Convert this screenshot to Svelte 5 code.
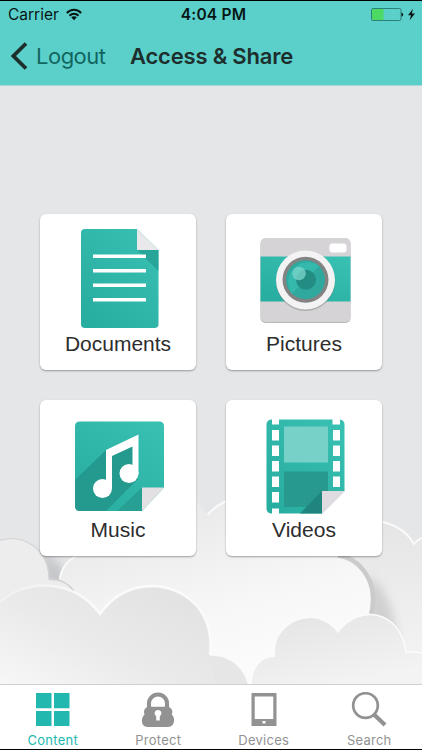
<script lang="ts">
  const title = "Access & Share";

  const cards = [
    { id: "documents", label: "Documents" },
    { id: "pictures", label: "Pictures" },
    { id: "music", label: "Music" },
    { id: "videos", label: "Videos" }
  ];

  const tabs = [
    { id: "content", label: "Content" },
    { id: "protect", label: "Protect" },
    { id: "devices", label: "Devices" },
    { id: "search", label: "Search" }
  ];

  // sprocket holes of the film strip
  const leftHoles = [36, 51.5, 67, 82.5, 98];
  const rightHoles = [36, 51.5, 67, 82.5];

  let active = $state("content");
</script>

<div class="screen">
  <header>
    <div class="status-bar">
      <div class="carrier">
        <span>Carrier</span>
        <svg width="16" height="13" viewBox="0 0 16 13" aria-hidden="true">
          <g fill="none" stroke="#071615" stroke-width="2">
            <path d="M.8 5C4.8 .7 11.2 .7 15.2 5" />
            <path d="M3.5 7.7C6 5.1 10 5.1 12.5 7.7" />
          </g>
          <path d="M5.2 9.3C6.8 7.9 9.2 7.9 10.8 9.3L8 12.2Z" fill="#071615" />
        </svg>
      </div>
      <span class="clock">4:04 PM</span>
      <svg class="battery" width="46" height="14" viewBox="0 0 46 14" aria-hidden="true">
        <rect x="1.5" y=".5" width="29.5" height="12" rx="1.5" fill="none" stroke="#2c8179" />
        <rect x="2" y="1" width="11.5" height="11" fill="#4cd964" />
        <path d="M31.5 4.2Q35 6.5 31.5 8.8Z" fill="#071615" />
        <path d="M43 .8L38 7.2H41L39.6 12.2L45 5.6H41.8Z" fill="#071615" />
      </svg>
    </div>
    <nav>
      <a class="back" href="#logout">
        <svg width="18" height="28" viewBox="0 0 18 28" aria-hidden="true">
          <path d="M16 1.5L3.4 14L16 26.5" fill="none" stroke="#1d2e2d" stroke-width="3.8" />
        </svg>
        <span>Logout</span>
      </a>
      <h1>{title}</h1>
    </nav>
  </header>

  <main>
    <svg class="clouds" width="422" height="284" viewBox="0 400 422 284" aria-hidden="true">
      <defs>
        <linearGradient id="right" x1="0" y1="0" x2="0" y2="1">
          <stop offset="0" stop-color="#e5e5e6" />
          <stop offset="1" stop-color="#f6f6f6" />
        </linearGradient>
        <linearGradient id="mid" x1=".2" y1="0" x2=".7" y2="1">
          <stop offset="0" stop-color="#e5e5e6" />
          <stop offset=".6" stop-color="#f7f7f7" />
          <stop offset="1" stop-color="#fdfdfd" />
        </linearGradient>
        <linearGradient id="front" x1="1" y1="0" x2="0" y2="1">
          <stop offset="0" stop-color="#e0e0e0" />
          <stop offset=".55" stop-color="#eaeaea" />
          <stop offset="1" stop-color="#f8f8f8" />
        </linearGradient>
        <linearGradient id="low" x1="0" y1="0" x2=".5" y2="1">
          <stop offset="0" stop-color="#e3e3e3" />
          <stop offset="1" stop-color="#f3f3f3" />
        </linearGradient>
        <linearGradient id="rim" x1="0" y1="0" x2="1" y2="0">
          <stop offset="0" stop-color="#fbfbfb" stop-opacity=".3" />
          <stop offset=".5" stop-color="#fbfbfb" />
        </linearGradient>
        <filter id="blur" x="-40%" y="-40%" width="180%" height="180%">
          <feGaussianBlur stdDeviation="5" />
        </filter>
      </defs>
      <path d="M340 550C345 522 370 519 384 522C398 525 408 534 414 544Q417 540 424 537V686H330Z" fill="url(#right)" />
      <path d="M382 522C398 525 408 534 414 544Q417 540 424 537" fill="none" stroke="#fafafa" stroke-width="2" />
      <path d="M368 575Q392 590 398 642L385 652H366Z" fill="#c4c4c5" filter="url(#blur)" opacity=".7" />
      <path d="M40 548L62 566L72 588L46 584Z" fill="#b8babd" filter="url(#blur)" opacity=".7" />
      <path d="M-2 541C24 532 49 550 49 579C61 579 70 585 75 594L90 620V684H-2Z" fill="#ededee" stroke="#d2d3d5" stroke-width="1.2" />
      <path d="M59 684V578C62 566 68 561 76 556C92 510 145 478 180 489Q198 500 207.500 515Q214 507 226 501C266 486 292 506 298 524Q310 548 338 556C358 558 372 578 372 600Q372 609 370 615L406 684Z" fill="url(#mid)" />
      <path d="M60 578C62 566 68 561 76 556M207.5 515Q214 507 226 501" fill="none" stroke="#fafafa" stroke-width="2" />
      <!-- lower lobe of the left cloud overlaps the middle one -->
      <path d="M48 579.500C61 579 70 584 74 592L76 610H48Z" fill="#ededee" />
      <path d="M49 579.500C61 579 70 584 74 592" fill="none" stroke="#cfd0d1" stroke-width="1.5" />
      <path d="M338 555.5C360 558 373 579 373 598Q373 608 371 614" fill="none" stroke="#cbcbcb" stroke-width="4.5" />
      <path d="M251 686C251 666 262 656 274.5 656.5C270 622 316 602 338 632C359 603 401 610 406 652.500Q414 650.500 424 654V686Z" fill="url(#low)" stroke="#fbfbfb" stroke-width="1.5" />
      <path d="M209 655C226 654 243 663 249 686H209Z" fill="#e6e6e6" stroke="#fafafa" stroke-width="1.5" />
      <path d="M-2 604C25 578 73 578 100 614C120 585 155 579 182 594C205 607 214 630 210 655L216 690H-2Z" fill="url(#front)" />
      <path d="M-2 604C25 578 73 578 100 614C120 585 155 579 182 594C205 607 213 630 210 655" fill="none" stroke="url(#rim)" stroke-width="2.5" />
    </svg>

    <div class="grid">
      {#each cards as card (card.id)}
        <button class="card">
          <svg width="156" height="116" viewBox="0 0 156 116" aria-hidden="true">
            {#if card.id === "documents"}
              <defs>
                <linearGradient id="teal" x1="1" y1="0" x2=".2" y2="1">
                  <stop offset="0" stop-color="#39c1b4" />
                  <stop offset="1" stop-color="#28aea1" />
                </linearGradient>
              </defs>
              <path d="M45 15H97L118.5 36V110Q118.5 114 114.5 114H45Q41 114 41 110V19Q41 15 45 15Z" fill="url(#teal)" />
              <path d="M97 36H118.5V57Z" fill="#239d91" opacity=".75" />
              <path d="M97 15L118.5 36H97Z" fill="#e9e8ea" />
              <path d="M53 42.3H106M53 56.8H106M53 71.2H106M53 85.8H106" stroke="#fff" stroke-width="3.6" />
            {:else if card.id === "pictures"}
              <rect x="34.5" y="25" width="90" height="84" rx="5" fill="#b9b7b9" />
              <rect x="34.5" y="24" width="90" height="84" rx="5" fill="#d6d3d6" />
              <rect x="34.5" y="42.5" width="90" height="45" fill="url(#teal)" />
              <rect x="103.5" y="29.5" width="17" height="9" rx="3" fill="#fff" />
              <circle cx="79.5" cy="67.5" r="29.5" fill="#757d7d" opacity=".45" />
              <circle cx="79.5" cy="66" r="29.5" fill="#f3f3f4" />
              <circle cx="79.5" cy="65.8" r="23" fill="#848384" />
              <circle cx="79.5" cy="65.8" r="19.5" fill="#2fa99e" />
              <path d="M66 79.5A19.5 19.5 0 0 1 93 52Z" fill="#35b9ad" />
              <circle cx="80" cy="65.8" r="10" fill="#238d84" />
              <circle cx="73" cy="59.5" r="6.8" fill="#7dd5cc" opacity=".75" />
            {:else if card.id === "music"}
              <path d="M40 21.5H119Q124 21.5 124 26V87.5L102 111H40Q35 111 35 106V26Q35 21.5 40 21.5Z" fill="url(#teal)" />
              <path d="M66 50L35 80V106Q35 111 40 111H66L98 79L94 45Z" fill="#249a8e" />
              <path d="M102 87.5V111H77Z" fill="#279f93" />
              <path d="M102 87.5H124L102 111Z" fill="#e2e0e3" />
              <path d="M66 50L98.5 34.5V74H92.5V46.5L72 56V88H66Z" fill="#fff" />
              <circle cx="62.5" cy="88.5" r="9.5" fill="#fff" />
              <circle cx="89" cy="73.5" r="9.5" fill="#fff" />
            {:else}
              <path d="M45 19.5H46V24.5H53V19.5H106.5V24.5H114V19.5Q118 20 118.5 24V91L96 113.5H45Q41 113 40.5 109V24Q41 20 45 19.5Z" fill="url(#teal)" />
              <rect x="58" y="26.5" width="44" height="36" fill="#78d1c8" />
              <path d="M58 71.5H102V91L86 107H58Z" fill="#27998e" />
              <path d="M74 113.5L96 91V113.5Z" fill="#20857c" />
              {#each leftHoles as y (y)}
                <rect x="46" y={y - 6} width="7" height="10.5" fill="#fff" />
              {/each}
              {#each rightHoles as y (y)}
                <rect x="107" y={y - 6} width="7" height="10.5" fill="#fff" />
              {/each}
              <rect x="46" y="108.5" width="7" height="5.5" fill="#fff" />
              <path d="M96 91H119L96 114Z" fill="#dedce0" />
            {/if}
          </svg>
          <span>{card.label}</span>
        </button>
      {/each}
    </div>
  </main>

  <footer>
    {#each tabs as tab (tab.id)}
      <button class="tab" class:active={active === tab.id} onclick={() => (active = tab.id)}>
        <svg width="36" height="36" viewBox="0 0 36 36" aria-hidden="true">
          {#if tab.id === "content"}
            <path d="M1 1H16.5V16.2H1ZM19 1H34.5V16.2H19ZM1 19H16.5V34H1ZM19 19H34.5V34H19Z" fill="currentColor" />
          {:else if tab.id === "protect"}
            <path d="M9 17V11.5A9 9 0 0 1 27 11.5V17" fill="none" stroke="currentColor" stroke-width="4.2" />
            <path d="M8 14.5H28Q34 17 31.8 22.5Q35 26 33.8 30.5Q32.5 35 27 35H8.5Q3 35 2 30.5Q1.2 26 4.5 22.5Q2.5 17 8 14.5Z" fill="currentColor" />
            <path d="M11.5 14.5V12A6.5 6.5 0 0 1 24.5 12V14.5Z" fill="#fff" />
            <path d="M16.2 28.5V24.2A3.4 3.4 0 1 1 19.8 24.2V28.5Z" fill="#fff" />
          {:else if tab.id === "devices"}
            <path fill-rule="evenodd" d="M5.5 1H30.5V34H5.5ZM8.7 4.5V27H27.3V4.5ZM16.5 29V31.5H19.5V29Z" fill="currentColor" />
          {:else}
            <circle cx="14.5" cy="13.5" r="12.3" fill="none" stroke="currentColor" stroke-width="2.7" />
            <path d="M23 22.5L34 33" stroke="currentColor" stroke-width="4.2" />
          {/if}
        </svg>
        <span>{tab.label}</span>
      </button>
    {/each}
  </footer>
</div>

<style>
  :global(body) {
    margin: 0;
  }

  .screen {
    box-sizing: border-box;
    display: flex;
    flex-direction: column;
    width: 422px;
    height: 750px;
    border-top: 1px solid #000;
    border-bottom: 1px solid #000;
    overflow: hidden;
    background: #e5e6e8;
    font-family: Inter, "Liberation Sans", sans-serif;
  }

  header {
    box-sizing: border-box;
    height: 85px;
    flex: none;
    background: #5bd0ca;
    border-bottom: 1px solid #a9d9d6;
    color: #071615;
  }

  .status-bar {
    display: grid;
    grid-template-columns: 1fr auto 1fr;
    align-items: center;
    height: 27px;
    padding: 0 6px 0 8px;
    font-size: 15.5px;
  }

  .carrier {
    display: flex;
    align-items: center;
    gap: 7px;
  }

  .clock {
    margin-left: 3px;
    font-weight: 600;
    letter-spacing: 0.2px;
  }

  .battery {
    justify-self: end;
  }

  nav {
    display: flex;
    align-items: center;
    height: 55px;
    padding-left: 10px;
  }

  .back {
    display: flex;
    align-items: center;
    gap: 8px;
    width: 120px;
    color: #11665f;
    font-size: 22px;
    letter-spacing: -0.5px;
    text-decoration: none;
  }

  h1 {
    margin: 0;
    color: #1d2e2d;
    font-size: 22px;
    font-weight: 600;
    letter-spacing: -0.2px;
    white-space: nowrap;
  }

  main {
    position: relative;
    flex: 1;
  }

  .clouds {
    position: absolute;
    left: 0;
    bottom: 0;
  }

  .grid {
    position: relative;
    display: grid;
    grid-template-columns: 156px 156px;
    gap: 30px;
    padding: 128px 40px 0;
  }

  button {
    border: 0;
    padding: 0;
    font-family: inherit;
  }

  .card {
    display: flex;
    flex-direction: column;
    align-items: center;
    height: 156px;
    border-radius: 6px;
    background: #fff;
    box-shadow: 0 1px 2px rgba(0, 0, 0, 0.35);
    color: #2d2d2d;
    font-family: "Liberation Sans", Arial, sans-serif;
    font-size: 21px;
    line-height: 27px;
  }

  .card svg,
  .tab svg {
    display: block;
    flex: none;
  }

  footer {
    box-sizing: border-box;
    display: grid;
    grid-template-columns: repeat(4, 1fr);
    height: 65px;
    flex: none;
    border-top: 1px solid #cfcfcf;
    background: #fff;
  }

  .tab {
    display: flex;
    flex-direction: column;
    align-items: center;
    padding-top: 7px;
    background: none;
    color: #929292;
    font-size: 13px;
    line-height: 24px;
    letter-spacing: 0.25px;
  }

  .tab.active {
    color: #22b8b0;
  }
</style>
